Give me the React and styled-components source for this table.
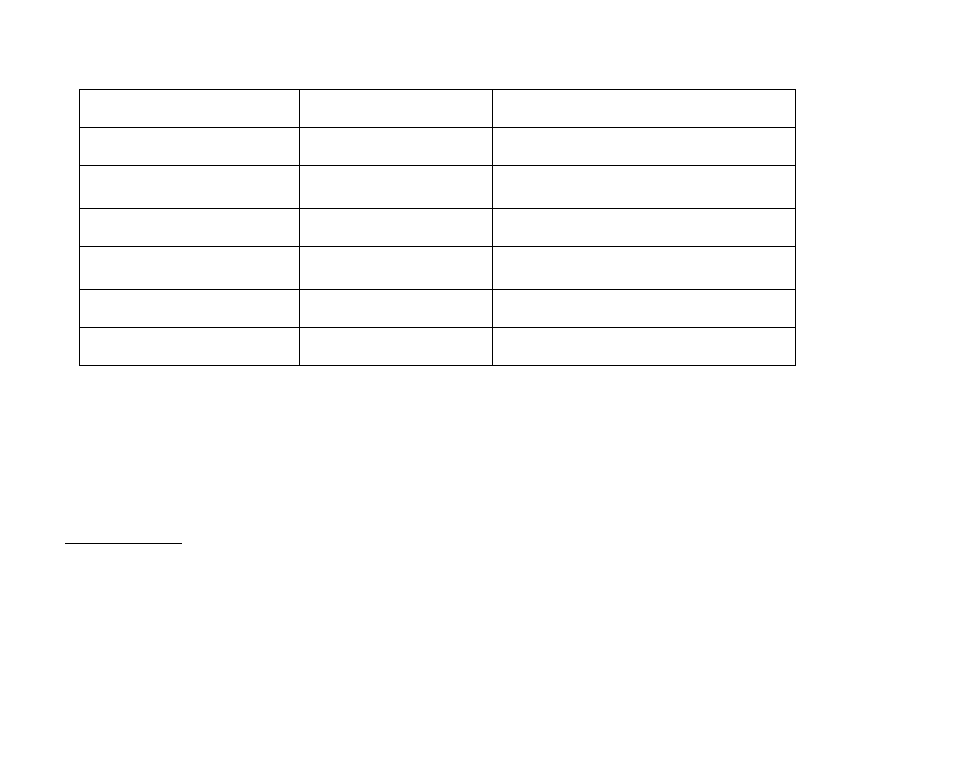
import React from 'react';
import styled, { createGlobalStyle } from 'styled-components';

const GlobalStyle = createGlobalStyle`
  html, body {
    margin: 0;
    padding: 0;
    background: #fff;
    font-family: "Liberation Sans", Arial, sans-serif;
  }
`;

const Page = styled.div`
  width: 954px;
  min-height: 781px;
  padding-top: 89px;
  box-sizing: border-box;
  display: flex;
  flex-direction: column;
`;

const Table = styled.div`
  margin-left: 79px;
  display: grid;
  grid-template-columns: 220px 193px 303px;
  width: max-content;
  border-left: 1px solid #000;
  border-top: 1px solid #000;
`;

const Cell = styled.div`
  box-sizing: border-box;
  height: ${(p) => p.$h}px;
  border-right: 1px solid #000;
  border-bottom: 1px solid #000;
`;

const FootRule = styled.hr`
  margin: 177px 0 0 65px;
  width: 117px;
  height: 0;
  border: none;
  border-top: 1px solid #000;
`;

const rows = [38, 38, 43, 38, 43, 38, 38];

export default function App() {
  return (
    <>
      <GlobalStyle />
      <Page>
        <Table>
          {rows.map((h, r) =>
            [0, 1, 2].map((c) => <Cell key={`${r}-${c}`} $h={h} />)
          )}
        </Table>
        <FootRule />
      </Page>
    </>
  );
}
